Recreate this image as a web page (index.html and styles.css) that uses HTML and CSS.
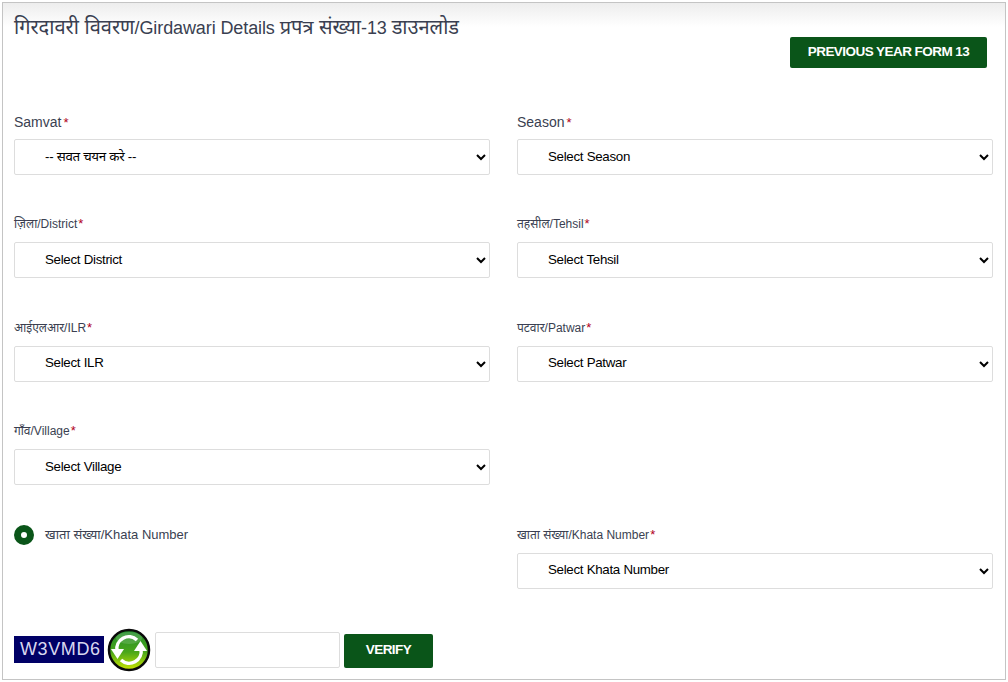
FILE: index.html
```html
<!DOCTYPE html>
<html lang="en">
<head>
    <meta charset="UTF-8">
    <meta name="viewport" content="width=device-width, initial-scale=1.0">
    <title>Girdawari Details</title>
    <link rel="stylesheet" href="styles.css">
</head>
<body>
    <div class="panel">
        <div class="panel-head">
            <h1 class="title"><span class="hi">गिरदावरी विवरण</span>/Girdawari Details <span class="hi">प्रपत्र संख्या</span>-13 <span class="hi">डाउनलोड</span></h1>
            <button class="btn btn-prev" type="button">PREVIOUS YEAR FORM 13</button>
        </div>

        <form class="form-grid">
            <div class="field">
                <label class="lbl lbl-big">Samvat<span class="req">*</span></label>
                <select class="sel"><option>-- सवत चयन करे --</option></select>
            </div>
            <div class="field">
                <label class="lbl lbl-big">Season<span class="req">*</span></label>
                <select class="sel"><option>Select Season</option></select>
            </div>

            <div class="field">
                <label class="lbl">ज़िला/District<span class="req">*</span></label>
                <select class="sel"><option>Select District</option></select>
            </div>
            <div class="field">
                <label class="lbl">तहसील/Tehsil<span class="req">*</span></label>
                <select class="sel"><option>Select Tehsil</option></select>
            </div>

            <div class="field">
                <label class="lbl">आईएलआर/ILR<span class="req">*</span></label>
                <select class="sel"><option>Select ILR</option></select>
            </div>
            <div class="field">
                <label class="lbl">पटवार/Patwar<span class="req">*</span></label>
                <select class="sel"><option>Select Patwar</option></select>
            </div>

            <div class="field">
                <label class="lbl">गाँव/Village<span class="req">*</span></label>
                <select class="sel"><option>Select Village</option></select>
            </div>
            <div class="field"></div>

            <div class="radio-row">
                <input class="radio" type="radio" name="mode" checked>
                <span class="radio-text">खाता संख्या/Khata Number</span>
            </div>
            <div class="field">
                <label class="lbl">खाता संख्या/Khata Number<span class="req">*</span></label>
                <select class="sel"><option>Select Khata Number</option></select>
            </div>
        </form>

        <div class="captcha-row">
            <span class="captcha">W3VMD6</span>
            <svg class="refresh" width="44" height="44" viewBox="0 0 44 44">
                <defs>
                    <linearGradient id="ball" x1="0" y1="0" x2="0" y2="1">
                        <stop offset="0" stop-color="#1f8a2c"/>
                        <stop offset="0.55" stop-color="#4aa61a"/>
                        <stop offset="1" stop-color="#cbe600"/>
                    </linearGradient>
                </defs>
                <circle cx="22" cy="22" r="20" fill="url(#ball)" stroke="#0a0a0a" stroke-width="2.5"/>
                <ellipse cx="22" cy="10" rx="13" ry="6" fill="#fff" opacity="0.15"/>
                <path d="M10 23 A12 12 0 0 1 30 12" fill="none" stroke="#fff" stroke-width="3.5"/>
                <path d="M4 21 L17 21 L10.500 31 Z" fill="#fff"/>
                <path d="M34 21 A12 12 0 0 1 14 32" fill="none" stroke="#fff" stroke-width="3.5"/>
                <path d="M27 23 L40 23 L33.500 13 Z" fill="#fff"/>
            </svg>
            <input class="captcha-input" type="text">
            <button class="btn btn-verify" type="button">VERIFY</button>
        </div>
    </div>
</body>
</html>
```

FILE: styles.css
```css
* {
    box-sizing: border-box;
}
body {
    margin: 0;
    background: #fff;
    font-family: "Liberation Sans", "Noto Sans", sans-serif;
}
.panel {
    height: 678px;
    margin: 2px 2px 0 2px;
    padding: 0 11px;
    border: 1px solid #c4c4c4;
    background: linear-gradient(to bottom, #ededed 0, #fff 24px);
}
.panel-head {
    display: flex;
    justify-content: space-between;
    align-items: flex-start;
    height: 110px;
}
.title {
    margin: 11px 0 0;
    font-size: 18px;
    font-weight: 400;
    line-height: 26px;
    letter-spacing: -0.1px;
    color: #3a3f51;
}
.hi {
    font-size: 20px;
    letter-spacing: 0;
}
.btn {
    padding: 0 0 3px;
    border: 0;
    border-radius: 2px;
    background: #0a5519;
    color: #fff;
    font-family: inherit;
    font-size: 13.500px;
    font-weight: 700;
    letter-spacing: -0.55px;
}
.btn-prev {
    width: 197px;
    height: 31px;
    margin: 34px 7px 0 0;
}
.form-grid {
    display: grid;
    grid-template-columns: 476px 476px;
    column-gap: 27px;
    row-gap: 41.400px;
}
.field {
    min-height: 62px;
}
.lbl {
    display: block;
    height: 18px;
    margin-bottom: 8px;
    font-size: 12px;
    line-height: 15px;
    color: #3a3f51;
}
.lbl-big {
    font-size: 14px;
    line-height: 18px;
}
.req {
    margin-left: 1px;
    color: #b00020;
    font-size: 13px;
}
.lbl-big .req {
    margin-left: 2px;
}
.sel {
    display: block;
    width: 100%;
    height: 36px;
    padding: 0 0 2px 26px;
    border: 1px solid #ddd;
    border-radius: 2px;
    background: #fff;
    color: #000;
    font-family: inherit;
    font-size: 13.333px;
    letter-spacing: -0.3px;
}
.radio-row {
    display: flex;
    align-items: flex-start;
    gap: 11px;
    margin-top: -2px;
}
.radio {
    appearance: none;
    flex: none;
    width: 20px;
    height: 20px;
    margin: 0;
    border: 7px solid #0a5519;
    border-radius: 50%;
    background: #fff;
}
.radio-text {
    padding-top: 1px;
    font-size: 13px;
    line-height: 18px;
    color: #3a3f51;
}
.captcha-row {
    display: flex;
    align-items: center;
    margin-top: 39px;
}
.captcha {
    width: 90px;
    height: 27px;
    padding-left: 6px;
    background: #000066;
    color: #d8d8f0;
    font-size: 18px;
    line-height: 27px;
    letter-spacing: 0.6px;
}
.refresh {
    margin-left: 3px;
}
.captcha-input {
    width: 185px;
    height: 36px;
    margin-left: 4px;
    border: 1px solid #ddd;
    border-radius: 2px;
    background: #fff;
}
.btn-verify {
    width: 89px;
    height: 34px;
    margin: 2px 0 0 4px;
}
```
